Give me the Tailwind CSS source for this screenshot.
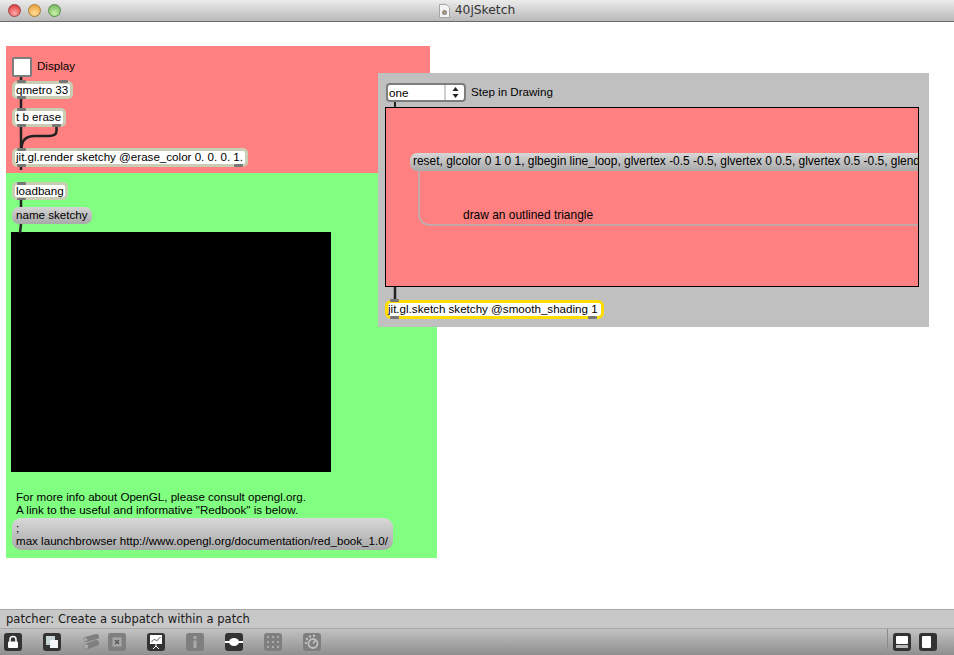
<!DOCTYPE html>
<html lang="en">
<head>
<meta charset="UTF-8">
<title>40jSketch</title>
<script src="https://cdn.jsdelivr.net/npm/@tailwindcss/browser@4"></script>
</head>
<body class="w-[954px] h-[655px] overflow-hidden flex flex-col bg-white font-['Liberation_Sans',Arial,sans-serif] text-[11.6px] text-black">

<!-- title bar -->
<div class="relative h-[22px] shrink-0 flex items-center justify-center bg-gradient-to-b from-[#ececec] to-[#b9b9b9] border-b border-[#6b6b6b]">
  <div class="absolute left-[8px] top-[4px] flex gap-[7px]">
    <div class="w-[13px] h-[13px] rounded-full border border-[#9c4545] bg-[radial-gradient(circle_at_50%_75%,#ffa8a8,#d92b2b)]"></div>
    <div class="w-[13px] h-[13px] rounded-full border border-[#a8803a] bg-[radial-gradient(circle_at_50%_75%,#ffdf9a,#e8952a)]"></div>
    <div class="w-[13px] h-[13px] rounded-full border border-[#5c8f47] bg-[radial-gradient(circle_at_50%_75%,#c8f2ac,#69ad4f)]"></div>
  </div>
  <div class="flex items-center gap-[5px] font-['DejaVu_Sans',sans-serif] text-[12.3px] text-[#333]">
    <svg width="11" height="14" viewBox="0 0 11 14"><path d="M.5.5h7l3 3v10H.5z" fill="#f4f4f4" stroke="#a5a5a5"/><circle cx="5.500" cy="8.500" r="2.500" fill="#8a8a8a"/><circle cx="5.500" cy="8.500" r="1" fill="#e0a060"/></svg>
    <span>40jSketch</span>
  </div>
</div>

<!-- patcher canvas -->
<div class="relative flex-1">
  <div class="absolute left-[6px] top-[24px] w-[424px] h-[127px] bg-[#ff8080]"></div>
  <div class="absolute left-[6px] top-[151px] w-[431px] h-[385px] bg-[#80ff80]"></div>
  <div class="absolute left-[11px] top-[210px] w-[320px] h-[240px] bg-black"></div>

  <!-- left patch cords -->
  <svg class="absolute left-0 top-0" width="440" height="220" fill="none" stroke="#222" stroke-width="2.500">
    <path d="M21 55v6M21 75v12M21 105v22"/>
    <path d="M56.500 105v4q0 5-8 5h-14q-13 0-13 13"/>
    <path d="M21 143v5M21 178v8M21 202l-1 9"/>
  </svg>

  <!-- toggle -->
  <div class="absolute left-[12px] top-[35px] w-[20px] h-[20px] bg-white border-[2px] border-[#7d7d7d] rounded-[2px]"></div>
  <span class="absolute left-[37px] top-[37px] leading-[14px]">Display</span>

  <!-- qmetro -->
  <div class="absolute left-[12px] top-[59px] w-[61px] h-[18px] bg-white border-[3px] border-[#c9cdb3] rounded-[5px] leading-[11px] pl-[1px] whitespace-nowrap">qmetro 33</div>
  <div class="absolute left-[17px] top-[58px] w-[9px] h-[3px] bg-[#777] rounded-[1px]"></div>
  <div class="absolute left-[59px] top-[58px] w-[9px] h-[3px] bg-[#777] rounded-[1px]"></div>
  <div class="absolute left-[17px] top-[74px] w-[9px] h-[3px] bg-[#777] rounded-[1px]"></div>

  <!-- t b erase -->
  <div class="absolute left-[12px] top-[86px] w-[54px] h-[19px] bg-white border-[3px] border-[#c9cdb3] rounded-[5px] leading-[12px] pl-[1px] whitespace-nowrap">t b erase</div>
  <div class="absolute left-[17px] top-[86px] w-[9px] h-[3px] bg-[#777] rounded-[1px]"></div>
  <div class="absolute left-[17px] top-[102px] w-[9px] h-[3px] bg-[#777] rounded-[1px]"></div>
  <div class="absolute left-[52px] top-[102px] w-[9px] h-[3px] bg-[#777] rounded-[1px]"></div>

  <!-- jit.gl.render -->
  <div class="absolute left-[12px] top-[126px] w-[236px] h-[19px] bg-white border-[3px] border-[#c9cdb3] rounded-[5px] leading-[12px] pl-[1px] whitespace-nowrap">jit.gl.render sketchy @erase_color 0. 0. 0. 1.</div>
  <div class="absolute left-[17px] top-[126px] w-[9px] h-[3px] bg-[#777] rounded-[1px]"></div>
  <div class="absolute left-[17px] top-[142px] w-[9px] h-[3px] bg-[#777] rounded-[1px]"></div>
  <div class="absolute left-[234px] top-[142px] w-[9px] h-[3px] bg-[#777] rounded-[1px]"></div>

  <!-- loadbang -->
  <div class="absolute left-[12px] top-[160px] w-[56px] h-[18px] bg-white border-[3px] border-[#c9cdb3] rounded-[5px] leading-[12px] pl-[1px] whitespace-nowrap">loadbang</div>
  <div class="absolute left-[17px] top-[160px] w-[9px] h-[3px] bg-[#777] rounded-[1px]"></div>
  <div class="absolute left-[17px] top-[176px] w-[9px] h-[2px] bg-[#777] rounded-[1px]"></div>

  <!-- name sketchy -->
  <div class="absolute left-[12px] top-[185px] w-[80px] h-[17px] bg-gradient-to-b from-[#d4d4d4] to-[#a9a9a9] rounded-[7px] leading-[15px] pl-[4px] whitespace-nowrap">name sketchy</div>

  <!-- comment and launchbrowser -->
  <p class="absolute left-[16px] top-[468px] leading-[13px] whitespace-nowrap">For more info about OpenGL, please consult opengl.org.<br>A link to the useful and informative "Redbook" is below.</p>
  <div class="absolute left-[12px] top-[496px] w-[381px] h-[32px] bg-gradient-to-b from-[#d8d8d8] to-[#a9a9a9] rounded-[9px] leading-[13px] pl-[4px] pt-[3px] whitespace-nowrap">;<br>max launchbrowser http://www.opengl.org/documentation/red_book_1.0/</div>

  <!-- gray subpatch -->
  <div class="absolute left-[378px] top-[51px] w-[551px] h-[254px] bg-[#c0c0c0]">
    <div class="absolute left-[8px] top-[10px] w-[80px] h-[19px] bg-white border-[2px] border-[#7d7d7d] rounded-[4px] flex items-center justify-between">
      <span class="pl-[1px] leading-[13px]">one</span>
      <div class="h-full w-[20px] border-l-[2px] border-[#cfcfcf] flex items-center justify-center">
        <svg width="7" height="11" viewBox="0 0 7 11" fill="#222"><path d="M3.500 0L6.500 4H.5zM3.500 11L.5 7h6z"/></svg>
      </div>
    </div>
    <span class="absolute left-[93px] top-[12px] leading-[14px]">Step in Drawing</span>
    <svg class="absolute left-[15px] top-[29px]" width="4" height="6" stroke="#222" stroke-width="2"><path d="M2 0v6"/></svg>

    <div class="absolute left-[7px] top-[34px] w-[534px] h-[180px] bg-[#ff8080] border border-black overflow-hidden">
      <svg class="absolute left-0 top-0" width="534" height="180" fill="none" stroke="#b4b4b4" stroke-width="1.500"><path d="M33 60v45q0 12 12 12h490"/></svg>
      <div class="absolute left-[24px] top-[45px] w-[520px] h-[18px] bg-gradient-to-b from-[#d8d8d8] to-[#a9a9a9] rounded-l-[7px] text-[11.95px] leading-[17px] pl-[3px] whitespace-nowrap overflow-hidden">reset, glcolor 0 1 0 1, glbegin line_loop, glvertex -0.5 -0.5, glvertex 0 0.5, glvertex 0.5 -0.5, glend</div>
      <span class="absolute left-[77px] top-[101px] text-[11.95px] leading-[13px]">draw an outlined triangle</span>
    </div>

    <svg class="absolute left-[15px] top-[214px]" width="4" height="14" stroke="#222" stroke-width="2.500"><path d="M2 0v14"/></svg>
    <div class="absolute left-[7px] top-[227px] w-[219px] h-[19px] bg-white border-[3px] border-[#ffdd00] rounded-[6px] leading-[12px] whitespace-nowrap">jit.gl.sketch sketchy @smooth_shading 1</div>
    <div class="absolute left-[12px] top-[226px] w-[9px] h-[3px] bg-[#777] rounded-[1px]"></div>
    <div class="absolute left-[12px] top-[243px] w-[9px] h-[3px] bg-[#777] rounded-[1px]"></div>
    <div class="absolute left-[210px] top-[243px] w-[9px] h-[3px] bg-[#777] rounded-[1px]"></div>
  </div>
</div>

<!-- status line -->
<div class="h-[20px] shrink-0 pl-[6px] pt-[2px] flex items-center bg-[#c8c8c8] border-y border-[#a8a8a8] font-['DejaVu_Sans',sans-serif] text-[11.570px] text-[#1a1a1a]">patcher: Create a subpatch within a patch</div>

<!-- toolbar -->
<div class="h-[26px] shrink-0 flex items-center justify-between pl-[4px] pr-[17px] bg-gradient-to-b from-[#c2c2c2] to-[#8f8f8f]">
  <div class="flex items-center">
    <div class="w-[18px] h-[18px] rounded-[3px] bg-[#333] flex items-center justify-center">
      <svg width="12" height="14" viewBox="0 0 12 14"><path d="M3 7V4.500a3 3 0 0 1 6 0V7" fill="none" stroke="#fff" stroke-width="1.500"/><rect x="1" y="6.500" width="10" height="6.500" rx="1" fill="#fff"/></svg>
    </div>
    <div class="ml-[21px] w-[18px] h-[18px] rounded-[3px] bg-[#333] flex items-center justify-center">
      <svg width="14" height="14" viewBox="0 0 14 14"><rect x="1" y="1" width="9" height="9" fill="#c9d6d6"/><rect x="5" y="5" width="8" height="8" fill="#f2f6f6"/></svg>
    </div>
    <div class="ml-[21px] w-[18px] h-[18px] flex items-center justify-center">
      <svg width="18" height="18" viewBox="0 0 18 18" fill="none" stroke-linecap="round"><path d="M4 6.500L14.500 3.500" stroke="#7f7f7f" stroke-width="5"/><path d="M4.500 13.500L14 10" stroke="#7f7f7f" stroke-width="6"/><circle cx="3.500" cy="6.500" r="1.800" fill="#aaa"/><circle cx="4" cy="13.500" r="2.200" fill="#aaa"/></svg>
    </div>
    <div class="ml-[8px] w-[18px] h-[18px] rounded-[3px] bg-[#7f7f7f] flex items-center justify-center">
      <svg width="10" height="10" viewBox="0 0 10 10"><rect x=".5" y=".5" width="9" height="9" fill="#a8a8a8"/><path d="M3 3l4 4M7 3l-4 4" stroke="#555" stroke-width="1.500"/></svg>
    </div>
    <div class="ml-[21px] w-[18px] h-[18px] rounded-[3px] bg-[#333] flex items-center justify-center">
      <svg width="14" height="16" viewBox="0 0 14 16"><rect x="1" y="1" width="12" height="9" fill="#fff"/><path d="M2.500 8l3-3 2 2 4-4" fill="none" stroke="#555"/><path d="M7 10v2M7 12l-3 3M7 12l3 3" stroke="#fff"/></svg>
    </div>
    <div class="ml-[21px] w-[18px] h-[18px] rounded-[3px] bg-[#7f7f7f] flex items-center justify-center">
      <svg width="4" height="12" viewBox="0 0 4 12" fill="#a9a9a9"><rect x=".5" y="0" width="3" height="3"/><rect x=".5" y="4.500" width="3" height="7.500"/></svg>
    </div>
    <div class="ml-[21px] w-[18px] h-[18px] rounded-[3px] bg-[#333] flex items-center justify-center">
      <svg width="18" height="8" viewBox="0 0 18 8" fill="#fff"><rect x="0" y="3" width="18" height="2"/><ellipse cx="9" cy="4" rx="5" ry="4"/></svg>
    </div>
    <div class="ml-[21px] w-[18px] h-[18px] rounded-[3px] bg-[#7f7f7f] flex items-center justify-center">
      <svg width="12" height="12" viewBox="0 0 12 12" fill="#a9a9a9"><rect x="0" y="0" width="2" height="2"/><rect x="5" y="0" width="2" height="2"/><rect x="10" y="0" width="2" height="2"/><rect x="0" y="5" width="2" height="2"/><rect x="5" y="5" width="2" height="2"/><rect x="10" y="5" width="2" height="2"/><rect x="0" y="10" width="2" height="2"/><rect x="5" y="10" width="2" height="2"/><rect x="10" y="10" width="2" height="2"/></svg>
    </div>
    <div class="ml-[21px] w-[18px] h-[18px] rounded-[3px] bg-[#7f7f7f] flex items-center justify-center">
      <svg width="16" height="16" viewBox="0 0 16 16" fill="none"><circle cx="9" cy="9.500" r="4.500" stroke="#c0c0c0" stroke-width="1.800"/><path d="M9 9.500l3-4" stroke="#c0c0c0" stroke-width="1.500"/><g fill="#c0c0c0"><circle cx="2" cy="9" r="1.200"/><circle cx="3" cy="5" r="1.200"/><circle cx="6" cy="2.500" r="1.200"/><circle cx="10" cy="1.800" r="1.200"/></g></svg>
    </div>
  </div>
  <div class="flex items-center self-stretch">
    <div class="w-px h-[20px] self-start bg-[#8a8a8a] mr-[5px]"></div>
    <div class="w-[18px] h-[18px] rounded-[3px] bg-[#333] p-[3px] flex flex-col gap-[1px]">
      <div class="flex-1 bg-white rounded-[1px]"></div>
      <div class="h-[3px] bg-[#bbb]"></div>
    </div>
    <div class="ml-[8px] w-[18px] h-[18px] rounded-[3px] bg-[#333] py-[3px] pl-[3px] pr-[6px]">
      <div class="h-full bg-white rounded-[1px]"></div>
    </div>
  </div>
</div>
</body>
</html>
